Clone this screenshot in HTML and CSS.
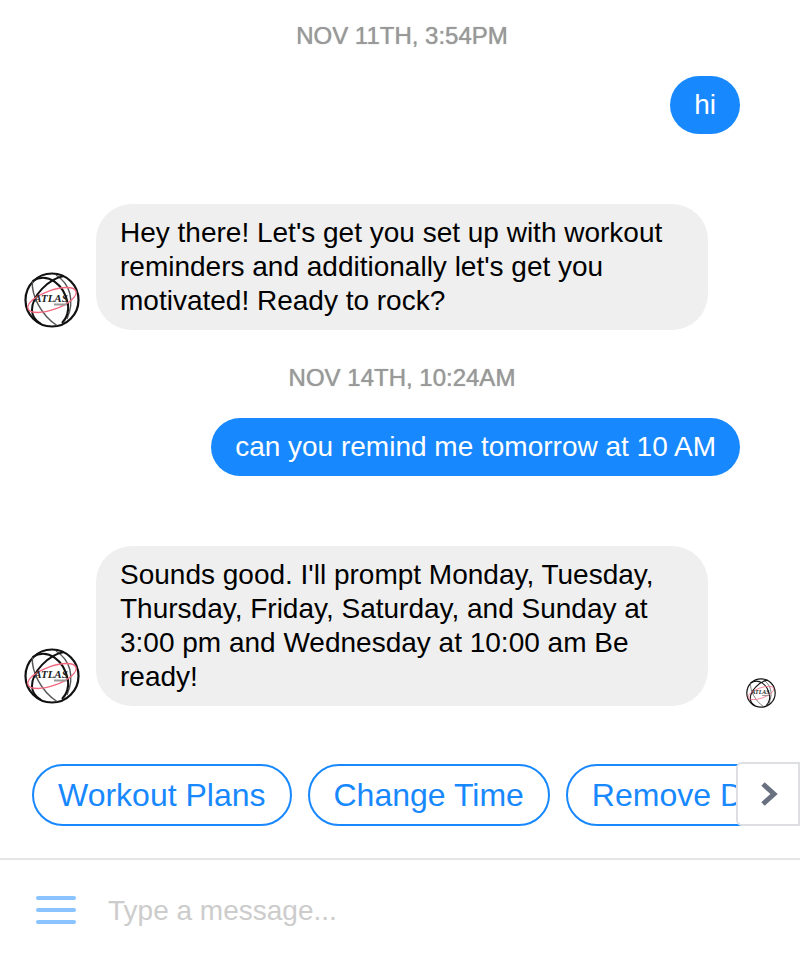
FILE: index.html
```
<!DOCTYPE html>
<html lang="en">
<head>
  <meta charset="utf-8">
  <meta name="viewport" content="width=device-width, initial-scale=1">
  <title>Atlas</title>
  <link rel="stylesheet" href="styles.css">
</head>
<body>
  <main class="thread">
    <time class="stamp">NOV 11TH, 3:54PM</time>
    <div class="row sent"><p class="bubble">hi</p></div>
    <div class="row received">
      <svg class="avatar logo" viewBox="0 0 56 56" role="img" aria-label="Atlas">
        <circle cx="28" cy="28" r="26.5" stroke-width="2.2"/>
        <path class="far" d="M8.5 9C7 23 17 43 33 53.5M32 3C46 12 51 28 43 47"/>
        <path class="near" d="M8.5 9C24 0 40 12 44 32C45 41 42 47 38 51M40 4C24 7 8 24 8 38C8 44 12 49 17 52"/>
        <ellipse class="ring" cx="28" cy="28" rx="25.5" ry="9.5" transform="rotate(-20 28 28)"/>
        <text class="logo-text" x="27" y="30" text-anchor="middle">ATLAS</text>
        <path class="tag" d="M30 32.5h13"/>
      </svg>
      <p class="bubble">Hey there! Let's get you set up with workout reminders and additionally let's get you motivated! Ready to rock?</p>
    </div>
    <time class="stamp later">NOV 14TH, 10:24AM</time>
    <div class="row sent"><p class="bubble">can you remind me tomorrow at 10 AM</p></div>
    <div class="row received">
      <svg class="avatar logo" viewBox="0 0 56 56" role="img" aria-label="Atlas">
        <circle cx="28" cy="28" r="26.5" stroke-width="2.2"/>
        <path class="far" d="M8.5 9C7 23 17 43 33 53.5M32 3C46 12 51 28 43 47"/>
        <path class="near" d="M8.5 9C24 0 40 12 44 32C45 41 42 47 38 51M40 4C24 7 8 24 8 38C8 44 12 49 17 52"/>
        <ellipse class="ring" cx="28" cy="28" rx="25.5" ry="9.5" transform="rotate(-20 28 28)"/>
        <text class="logo-text" x="27" y="30" text-anchor="middle">ATLAS</text>
        <path class="tag" d="M30 32.5h13"/>
      </svg>
      <p class="bubble">Sounds good. I'll prompt Monday, Tuesday, Thursday, Friday, Saturday, and Sunday at 3:00 pm and Wednesday at 10:00 am Be ready!</p>
      <svg class="receipt logo" viewBox="0 0 56 56" role="img" aria-label="Seen">
        <circle cx="28" cy="28" r="26.5" stroke-width="2.2"/>
        <path class="far" d="M8.5 9C7 23 17 43 33 53.5M32 3C46 12 51 28 43 47"/>
        <path class="near" d="M8.5 9C24 0 40 12 44 32C45 41 42 47 38 51M40 4C24 7 8 24 8 38C8 44 12 49 17 52"/>
        <ellipse class="ring" cx="28" cy="28" rx="25.5" ry="9.5" transform="rotate(-20 28 28)"/>
        <text class="logo-text" x="27" y="30" text-anchor="middle">ATLAS</text>
        <path class="tag" d="M30 32.5h13"/>
      </svg>
    </div>
  </main>

  <div class="replies">
    <div class="chips">
      <button class="chip" type="button">Workout Plans</button>
      <button class="chip" type="button">Change Time</button>
      <button class="chip" type="button">Remove D</button>
    </div>
    <button class="next" type="button" aria-label="More replies">
      <svg width="20" height="26" viewBox="0 0 20 26"><path d="M5 3L16 13L5 23" fill="none" stroke="#697080" stroke-width="5"/></svg>
    </button>
  </div>

  <form class="composer">
    <button class="menu" type="button" aria-label="Menu">
      <svg width="40" height="30" viewBox="0 0 40 30"><path d="M2 2H38M2 14H38M2 26H38" stroke="#8ac3ff" stroke-width="4" stroke-linecap="round"/></svg>
    </button>
    <input class="field" type="text" placeholder="Type a message..." aria-label="Type a message">
  </form>
</body>
</html>
```
FILE: styles.css
```
* {
  box-sizing: border-box;
}

body {
  margin: 0;
  background: #fff;
  color: #000;
  font: 28px/34px "Liberation Sans", Arial, sans-serif;
}

button,
input {
  font: inherit;
}

svg {
  display: block;
}

.logo {
  flex: none;
  fill: none;
  stroke: #111;
}

.logo .far {
  stroke: #555;
  stroke-width: 1.4;
}

.logo .near {
  stroke-width: 2;
}

.logo .ring {
  stroke: #f4687f;
  stroke-width: 1.3;
}

.logo .tag {
  stroke: #999;
  stroke-width: 2;
}

.logo-text {
  font: italic bold 11px "Liberation Serif", serif;
  fill: #222;
  stroke: none;
}

.thread {
  padding: 20px 20px 0 24px;
}

.stamp {
  display: block;
  margin-bottom: 24px;
  color: #999;
  font-size: 24px;
  line-height: 32px;
  text-align: center;
  text-shadow: 0 0 1px #999;
}

.stamp.later {
  margin-top: 32px;
}

.row {
  display: flex;
  align-items: flex-end;
}

.bubble {
  max-width: 612px;
  margin: 0;
  padding: 12px 24px;
  border-radius: 36px;
}

.sent {
  justify-content: flex-end;
  margin-bottom: 70px;
  padding-right: 40px;
}

.sent .bubble {
  border-radius: 29px;
  background: #1788fe;
  color: #fff;
}

.received {
  gap: 16px;
}

.received .bubble {
  background: #efefef;
}

.avatar {
  width: 56px;
  height: 56px;
  margin-bottom: 2px;
}

.receipt {
  width: 30px;
  height: 30px;
  margin: 0 4px -2px auto;
}

.replies {
  position: relative;
  margin-top: 56px;
  padding: 2px 0 32px;
  border-bottom: 2px solid #e5e5e5;
}

.chips {
  display: flex;
  gap: 16px;
  overflow: hidden;
  padding-left: 32px;
}

.chip {
  flex: none;
  height: 62px;
  padding: 0 24px;
  border: 2px solid #1788fe;
  border-radius: 31px;
  background: #fff;
  color: #1788fe;
  font-size: 32px;
}

.next {
  position: absolute;
  top: 0;
  right: 0;
  display: grid;
  place-items: center;
  width: 64px;
  height: 64px;
  padding: 0;
  border: 2px solid #dddfe2;
  border-radius: 6px 0 0 6px;
  background: #fff;
}

.composer {
  display: flex;
  align-items: center;
  gap: 32px;
  padding: 24px 36px;
}

.menu {
  padding: 0;
  border: 0;
  background: none;
}

.field {
  flex: 1;
  min-width: 0;
  height: 54px;
  padding: 0;
  border: 0;
  outline: 0;
  background: none;
}

.field::placeholder {
  color: #ccc;
  opacity: 1;
}
```
